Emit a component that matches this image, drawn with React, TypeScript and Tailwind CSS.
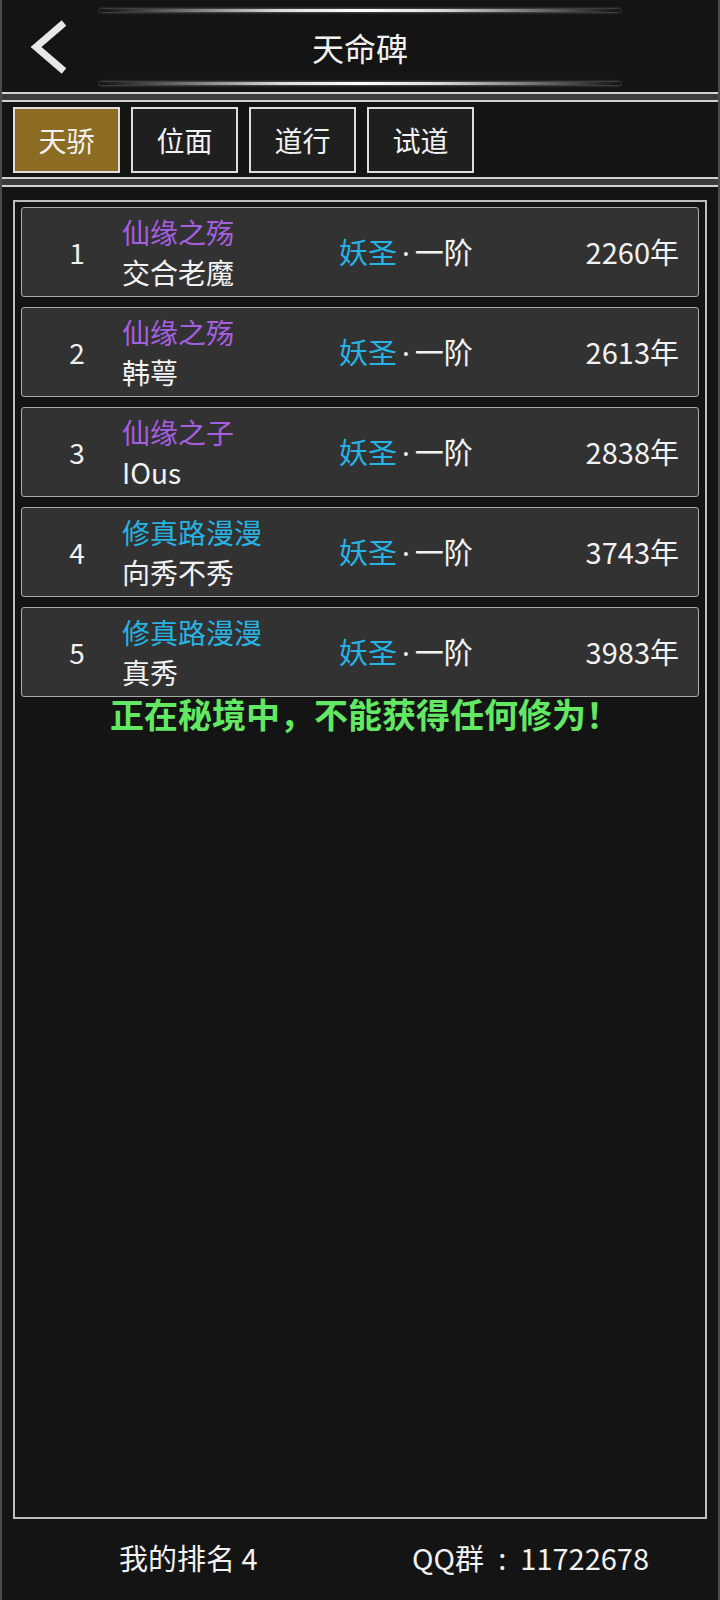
import React from 'react';

type Entry = {
  rank: number;
  title: string;
  titleColor: string;
  name: string;
  realm: string;
  stage: string;
  years: number;
};

const entries: Entry[] = [
  { rank: 1, title: '仙缘之殇', titleColor: 'text-[#a65fe0]', name: '交合老魔', realm: '妖圣', stage: '一阶', years: 2260 },
  { rank: 2, title: '仙缘之殇', titleColor: 'text-[#a65fe0]', name: '韩萼', realm: '妖圣', stage: '一阶', years: 2613 },
  { rank: 3, title: '仙缘之子', titleColor: 'text-[#a65fe0]', name: 'IOus', realm: '妖圣', stage: '一阶', years: 2838 },
  { rank: 4, title: '修真路漫漫', titleColor: 'text-[#27b3e3]', name: '向秀不秀', realm: '妖圣', stage: '一阶', years: 3743 },
  { rank: 5, title: '修真路漫漫', titleColor: 'text-[#27b3e3]', name: '真秀', realm: '妖圣', stage: '一阶', years: 3983 },
];

const tabs = ['天骄', '位面', '道行', '试道'];

function GlowLine() {
  return (
    <div className="h-[3px] w-[520px] bg-[linear-gradient(90deg,rgba(255,255,255,0)_0%,rgba(255,255,255,0.85)_35%,#ffffff_50%,rgba(255,255,255,0.85)_65%,rgba(255,255,255,0)_100%)] shadow-[0_0_3px_rgba(255,255,255,0.5)]" />
  );
}

export default function App() {
  return (
    <div
      className="flex h-[1600px] w-[720px] flex-col overflow-hidden border-x-2 border-[#4a4a4a] bg-[#141414] text-[#f2f2f2]"
      style={{ fontFamily: '"Noto Sans CJK SC", "Noto Sans", sans-serif' }}
    >
      {/* header */}
      <header className="relative flex h-[94px] flex-col items-center justify-between border-b-2 border-[#d2d2d2] pt-[9px] pb-[7px]">
        <GlowLine />
        <h1 className="text-[32px] leading-[40px]">天命碑</h1>
        <GlowLine />
        <button className="absolute left-[26px] top-[20px]">
          <svg width="42" height="54" viewBox="0 0 42 54">
            <path d="M36 3 L8 27 L36 51" fill="none" stroke="#e8e8e8" strokeWidth="7" />
          </svg>
        </button>
      </header>

      <div className="h-[6px] bg-[#3c3c3c]" />

      {/* tabs */}
      <nav className="flex h-[79px] gap-[11px] border-y-2 border-[#d2d2d2] px-[11px] pt-[5px]">
        {tabs.map((t, i) => (
          <div
            key={t}
            className={`flex h-[66px] w-[107px] items-center justify-center border-2 border-[#dedede] text-[28px] ${
              i === 0 ? 'bg-[#8c6b22]' : 'bg-[#1f1f1f]'
            }`}
          >
            {t}
          </div>
        ))}
      </nav>

      <div className="h-[6px] bg-[#3c3c3c]" />

      {/* list + footer */}
      <main className="flex flex-1 flex-col border-t-2 border-[#d2d2d2] px-[11px] pt-[13px]">
        <section className="flex h-[1319px] flex-col gap-[10px] border-2 border-[#bdbdbd] px-[6px] pt-[5px]">
          {entries.map(e => (
            <div
              key={e.rank}
              className="flex h-[90px] items-center rounded-[3px] border border-[#a9a9a9] bg-[#323232] text-[28px]"
            >
              <div className="w-[100px] pl-[10px] text-center">{e.rank}</div>
              <div className="flex w-[217px] flex-col leading-[40px]">
                <span className={e.titleColor}>{e.title}</span>
                <span>{e.name}</span>
              </div>
              <div className="flex-1 text-[29px]">
                <span className="text-[#27b3e3]">{e.realm}</span>
                <span className="mx-[5px] font-['Noto_Sans',sans-serif]">·</span>
                <span>{e.stage}</span>
              </div>
              <div className="pr-[19px] text-[29px]">{e.years}年</div>
            </div>
          ))}
          <p className="-mt-[13px] pl-[10px] text-center text-[34px] font-bold leading-[40px] text-[#63e864]">
            正在秘境中，不能获得任何修为！
          </p>
        </section>

        <footer className="flex flex-1 items-center pb-[4px] text-[29px]">
          <span className="ml-[106px] w-[293px]">我的排名 4</span>
          <span>
            QQ群<span className="inline-block w-[1.25em] text-center">:</span>11722678
          </span>
        </footer>
      </main>
    </div>
  );
}
